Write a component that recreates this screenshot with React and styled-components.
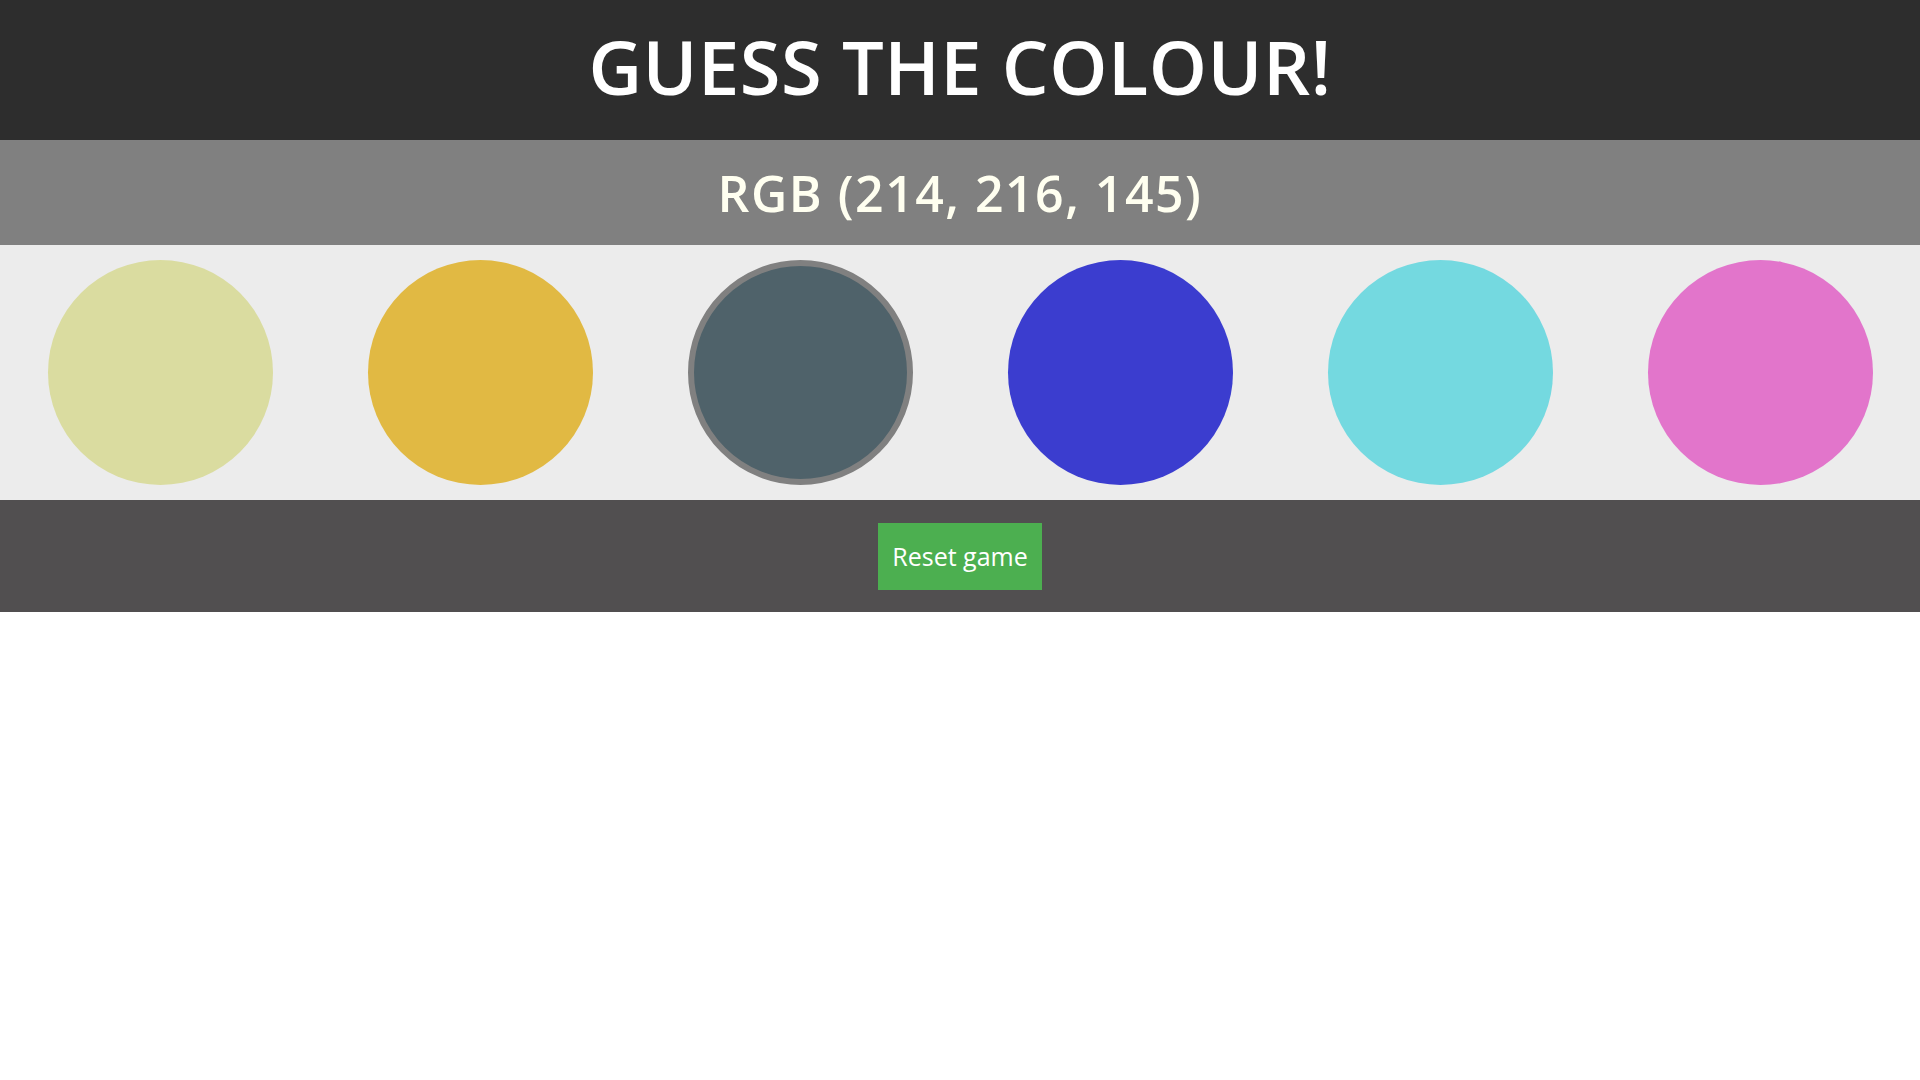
import styled, {createGlobalStyle} from "styled-components";
import {useState} from "react";

const GlobalStyle = createGlobalStyle`
  body {
    margin: 0;
    background: #fff;
    font-family: "Open Sans", "DejaVu Sans", sans-serif;
  }
`;

const Header = styled.header`
  box-sizing: border-box;
  height: 140px;
  padding-bottom: 6px;
  background: #2d2d2d;
  display: flex;
  align-items: center;
  justify-content: center;
`;
const Title = styled.h1`
  margin: 0;
  color: #fff;
  font-size: 74px;
  font-weight: 600;
  letter-spacing: 0.5px;
  line-height: 1;
`;
const ColourBar = styled.div`
  height: 105px;
  background: #808080;
  display: flex;
  align-items: center;
  justify-content: center;
`;
const ColourCode = styled.h2`
  margin: 0;
  color: #fffff0;
  font-size: 50px;
  font-weight: 600;
  letter-spacing: 1.5px;
  line-height: 1;
`;
const Board = styled.div`
  display: grid;
  grid-template-columns: repeat(6, 1fr);
  padding: 15px 0;
  background: #ececec;
`;
const Cell = styled.div`
  display: flex;
  justify-content: center;
`;
const Circle = styled.div`
  box-sizing: border-box;
  width: 225px;
  height: 225px;
  border-radius: 50%;
  background: ${p => p.$colour};
  border: ${p => p.$picked ? "6px solid #808080" : "none"};
  cursor: pointer;
`;
const Footer = styled.div`
  height: 112px;
  background: #514f50;
  display: flex;
  align-items: center;
  justify-content: center;
`;
const ResetButton = styled.button`
  width: 164px;
  height: 67px;
  background: #4caf50;
  color: #fff;
  border: none;
  font-family: "Open Sans", "DejaVu Sans", sans-serif;
  font-size: 25px;
  cursor: pointer;
`;

const colours = [
    "rgb(218, 220, 160)",
    "rgb(225, 185, 67)",
    "rgb(79, 98, 106)",
    "rgb(59, 61, 207)",
    "rgb(116, 217, 224)",
    "rgb(226, 117, 203)"
];

const App = () => {
    const [picked, setPicked] = useState(2);

    return (
        <>
            <GlobalStyle/>
            <Header>
                <Title>GUESS THE COLOUR!</Title>
            </Header>
            <ColourBar>
                <ColourCode>RGB (214, 216, 145)</ColourCode>
            </ColourBar>
            <Board>
                {colours.map((c, i) => (
                    <Cell key={i}>
                        <Circle $colour={c} $picked={picked === i} onClick={() => setPicked(i)}/>
                    </Cell>
                ))}
            </Board>
            <Footer>
                <ResetButton onClick={() => setPicked(-1)}>Reset game</ResetButton>
            </Footer>
        </>
    );
};

export default App;
